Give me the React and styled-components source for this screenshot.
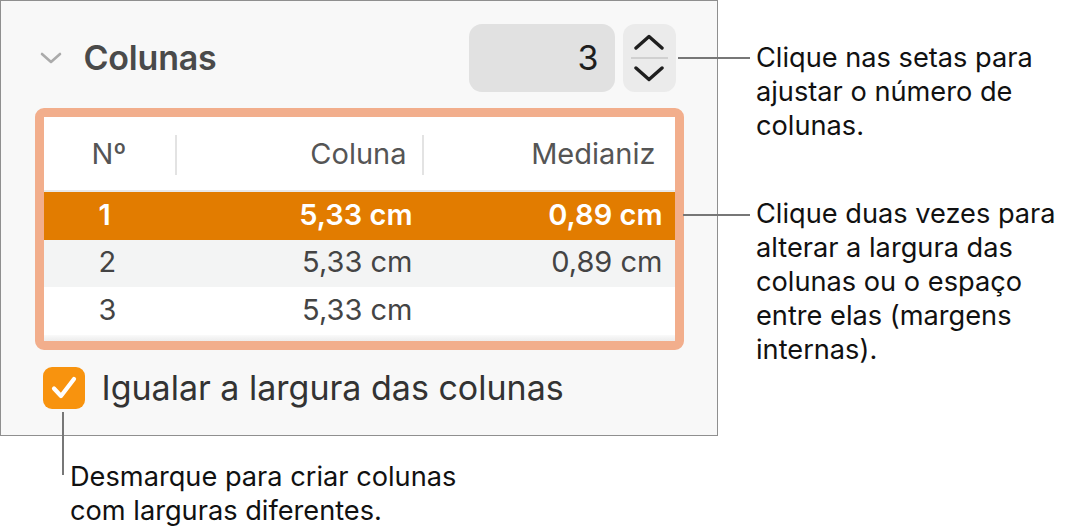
import React from "react";
import styled, { createGlobalStyle } from "styled-components";

const Global = createGlobalStyle`
  html, body { margin: 0; padding: 0; background: #ffffff; }
  body { font-family: Inter, "Noto Sans", sans-serif; -webkit-font-smoothing: antialiased; }
`;

const Page = styled.div`
  position: relative;
  width: 1077px;
  height: 529px;
  display: grid;
  grid-template-columns: 718px 1fr;
  grid-template-rows: 436px 1fr;
  column-gap: 38px;
  overflow: hidden;
`;

const Panel = styled.section`
  box-sizing: border-box;
  width: 718px;
  height: 436px;
  background: #f8f8f8;
  border: 1.5px solid #8f8f8f;
  padding: 22.5px 33.5px 0 33.5px;
  display: flex;
  flex-direction: column;
`;

const HeaderRow = styled.div`
  height: 68px;
  display: flex;
  align-items: center;
  padding: 0 8px 0 5px;
`;

const Title = styled.h2`
  margin: 0 0 0 22px;
  font-size: 34px;
  font-weight: 600;
  color: #4a4a4a;
  flex: 1;
  letter-spacing: -0.2px;
`;

const Field = styled.div`
  width: 146px;
  height: 68px;
  box-sizing: border-box;
  background: #e1e1e1;
  border-radius: 13px;
  display: flex;
  align-items: center;
  justify-content: flex-end;
  padding-right: 16px;
  font-size: 34px;
  color: #1e1e1e;
`;

const Stepper = styled.div`
  width: 53px;
  height: 68px;
  margin-left: 8px;
  background: #ebebeb;
  border-radius: 12px;
  display: flex;
  flex-direction: column;
  align-items: center;
  justify-content: center;
`;

const StepDivider = styled.div`
  width: 37px;
  height: 2px;
  background: #d0d0d0;
  margin: 7px 0;
`;

const TableCard = styled.div`
  margin-top: 16px;
  border: 9.5px solid #f2ae8c;
  border-radius: 9px;
  background: #ffffff;
  overflow: hidden;
  display: flex;
  flex-direction: column;
`;

const Grid = styled.div`
  display: grid;
  grid-template-columns: 132px 247px 1fr;
  align-items: center;
  height: ${(p) => p.$h}px;
  background: ${(p) => p.$bg || "#ffffff"};
  color: ${(p) => p.$color || "#444444"};
  font-size: 29px;
  font-weight: ${(p) => (p.$bold ? 600 : 400)};
  border-bottom: ${(p) => (p.$sep ? "2px solid #e8e8e8" : "none")};
`;

const HeadCell = styled.div`
  position: relative;
  height: 100%;
  display: flex;
  align-items: center;
  justify-content: ${(p) => p.$align || "flex-end"};
  padding: ${(p) => p.$pad || "0"};
  color: #555555;
  ${(p) =>
    p.$divider &&
    `&::after { content: ""; position: absolute; right: -1px; top: 18px; bottom: 15px; width: 2px; background: #e3e3e3; }`}
`;

const Cell = styled.div`
  display: flex;
  justify-content: ${(p) => p.$align || "flex-end"};
  padding: ${(p) => p.$pad || "0"};
  margin-top: ${(p) => p.$shift || 0}px;
`;

const TableFoot = styled.div`
  height: 6px;
  background: linear-gradient(#fafafa, #ececec);
`;

const CheckRow = styled.label`
  margin-top: 17px;
  padding-left: 8px;
  display: flex;
  align-items: center;
  gap: 17px;
  font-size: 34px;
  color: #333333;
`;

const CheckBox = styled.span`
  width: 42px;
  height: 42px;
  border-radius: 9px;
  background: #f8930e;
  display: flex;
  align-items: center;
  justify-content: center;
`;

const Callouts = styled.div`
  display: flex;
  flex-direction: column;
`;

const Note = styled.p`
  margin: ${(p) => p.$top}px 0 0 0;
  font-size: 27.2px;
  line-height: 34px;
  color: #111111;
  white-space: nowrap;
`;

const BottomNote = styled(Note)`
  grid-column: 1 / 2;
  padding-left: 70px;
`;

const Leader = styled.div`
  position: absolute;
  background: #777777;
  left: ${(p) => p.$x}px;
  top: ${(p) => p.$y}px;
  width: ${(p) => p.$w}px;
  height: ${(p) => p.$h}px;
`;

const Chevron = ({ dir }) => (
  <svg width="32" height="16" viewBox="0 0 32 16">
    <path
      d={dir === "up" ? "M3 14 L16 2.5 L29 14" : "M3 2 L16 13.5 L29 2"}
      fill="none"
      stroke="#1f1f1f"
      strokeWidth="3.4"
      strokeLinecap="round"
      strokeLinejoin="round"
    />
  </svg>
);

const rows = [
  { n: "1", c: "5,33 cm", m: "0,89 cm", bg: "#e27c00", color: "#ffffff", bold: true, h: 48 },
  { n: "2", c: "5,33 cm", m: "0,89 cm", bg: "#f3f4f4", h: 47 },
  { n: "3", c: "5,33 cm", m: "", bg: "#ffffff", h: 48 },
];

export default function App() {
  return (
    <>
      <Global />
      <Page>
        <Panel>
          <HeaderRow>
            <svg width="22" height="14" viewBox="0 0 22 14">
              <path d="M2 3 L11 11 L20 3" fill="none" stroke="#ababab" strokeWidth="2.6" strokeLinecap="round" strokeLinejoin="round" />
            </svg>
            <Title>Colunas</Title>
            <Field>3</Field>
            <Stepper>
              <Chevron dir="up" />
              <StepDivider />
              <Chevron dir="down" />
            </Stepper>
          </HeaderRow>
          <TableCard>
            <Grid $h={73} $sep>
              <HeadCell $align="flex-start" $pad="0 0 0 48px" $divider>Nº</HeadCell>
              <HeadCell $pad="0 16px 0 0" $divider>Coluna</HeadCell>
              <HeadCell $pad="0 19px 0 0">Medianiz</HeadCell>
            </Grid>
            {rows.map((r) => (
              <Grid key={r.n} $h={r.h} $bg={r.bg} $color={r.color} $bold={r.bold}>
                <Cell $align="flex-start" $pad="0 0 0 55px" $shift={-3}>{r.n}</Cell>
                <Cell $pad="0 10px 0 0" $shift={-3}>{r.c}</Cell>
                <Cell $pad="0 12px 0 0" $shift={-3}>{r.m}</Cell>
              </Grid>
            ))}
            <TableFoot />
          </TableCard>
          <CheckRow>
            <CheckBox>
              <svg width="32" height="28" viewBox="0 0 32 28">
                <path d="M6 14.5 L13 22 L26 5" fill="none" stroke="#ffffff" strokeWidth="4.2" strokeLinecap="round" strokeLinejoin="round" />
              </svg>
            </CheckBox>
            Igualar a largura das colunas
          </CheckRow>
        </Panel>
        <Callouts>
          <Note $top={41}>
            Clique nas setas para
            <br />
            ajustar o número de
            <br />
            colunas.
          </Note>
          <Note $top={54}>
            Clique duas vezes para
            <br />
            alterar a largura das
            <br />
            colunas ou o espaço
            <br />
            entre elas (margens
            <br />
            internas).
          </Note>
        </Callouts>
        <BottomNote $top={24}>
          Desmarque para criar colunas
          <br />
          com larguras diferentes.
        </BottomNote>
        <Leader $x={678} $y={57} $w={72} $h={2} />
        <Leader $x={683} $y={214} $w={67} $h={2} />
        <Leader $x={62} $y={412} $w={2} $h={63} />
      </Page>
    </>
  );
}
